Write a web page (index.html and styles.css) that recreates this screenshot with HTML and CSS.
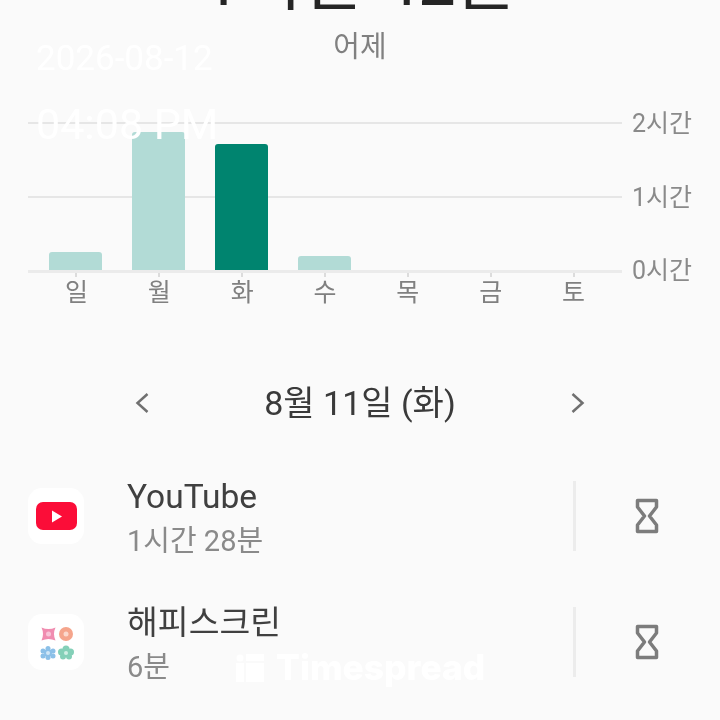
FILE: index.html
```html
<!DOCTYPE html>
<html>

<head>
    <title>Screen time</title>
    <link rel="stylesheet" href="styles.css">
</head>

<body>
    <div class="screen">
        <header class="summary">
            <h1 class="total">1시간 42분</h1>
            <p class="day-label">어제</p>
        </header>

        <section class="chart">
            <div class="plot">
                <div class="gridline gridline-top"><span class="axis-label">2시간</span></div>
                <div class="gridline gridline-mid"><span class="axis-label">1시간</span></div>
                <div class="bars">
                    <div class="bar-slot"><div class="bar" style="height: 18px"></div></div>
                    <div class="bar-slot"><div class="bar" style="height: 138px"></div></div>
                    <div class="bar-slot"><div class="bar bar-active" style="height: 126px"></div></div>
                    <div class="bar-slot"><div class="bar" style="height: 14px"></div></div>
                    <div class="bar-slot"></div>
                    <div class="bar-slot"></div>
                    <div class="bar-slot"></div>
                    <span class="axis-label axis-zero">0시간</span>
                </div>
            </div>
            <div class="days">
                <span class="day">일</span>
                <span class="day">월</span>
                <span class="day">화</span>
                <span class="day">수</span>
                <span class="day">목</span>
                <span class="day">금</span>
                <span class="day">토</span>
            </div>
        </section>

        <nav class="date-nav">
            <svg class="chevron" width="14" height="24" viewBox="0 0 14 24">
                <path d="M12.500 3 L2.500 12 L12.500 21" />
            </svg>
            <span class="date-title">8월 11일 (화)</span>
            <svg class="chevron" width="14" height="24" viewBox="0 0 14 24">
                <path d="M1.500 3 L11.500 12 L1.500 21" />
            </svg>
        </nav>

        <ul class="apps">
            <li class="app">
                <div class="app-icon">
                    <svg width="42" height="30" viewBox="0 0 42 30">
                        <rect x="1" y="1" width="41" height="28" rx="7" fill="#fb0d38" />
                        <path d="M17 9.500 L27 15.500 L17 21.500 Z" fill="#fff" />
                    </svg>
                </div>
                <div class="app-text">
                    <span class="app-name">YouTube</span>
                    <span class="app-time">1시간 28분</span>
                </div>
                <div class="timer">
                    <svg width="24" height="36" viewBox="0 0 24 36">
                        <path d="M2.500 2.500 H21.500 V9 L14.500 18 L21.500 27 V33.500 H2.500 V27 L9.500 18 L2.500 9 Z" />
                    </svg>
                </div>
            </li>
            <li class="app">
                <div class="app-icon">
                    <svg width="44" height="44" viewBox="0 0 44 44">
                        <path d="M7.500 7.500 Q14.500 10.500 21.500 7.500 Q18.500 14 21.500 20.500 Q14.500 17.500 7.500 20.500 Q10.500 14 7.500 7.500 Z" fill="#f08cb0" />
                        <circle cx="14.500" cy="14" r="2.500" fill="#f8c4d8" />
                        <circle cx="32" cy="14" r="7" fill="#f5a58c" />
                        <circle cx="32" cy="14" r="2.500" fill="#fbd8cc" />
                        <g fill="#8cc0e8">
                            <circle cx="14" cy="28.500" r="2.500" />
                            <circle cx="14" cy="37.500" r="2.500" />
                            <circle cx="9" cy="31" r="2.500" />
                            <circle cx="19" cy="31" r="2.500" />
                            <circle cx="9" cy="36" r="2.500" />
                            <circle cx="19" cy="36" r="2.500" />
                            <circle cx="14" cy="33" r="4" />
                        </g>
                        <circle cx="14" cy="33" r="2" fill="#d0e6f6" />
                        <g fill="#84d0b8">
                            <circle cx="32" cy="29" r="3.500" />
                            <circle cx="27.500" cy="32" r="3.500" />
                            <circle cx="36.500" cy="32" r="3.500" />
                            <circle cx="29" cy="36.500" r="3" />
                            <circle cx="35" cy="36.500" r="3" />
                            <circle cx="32" cy="33" r="4" />
                        </g>
                        <circle cx="32" cy="33" r="2" fill="#d0efe4" />
                    </svg>
                </div>
                <div class="app-text">
                    <span class="app-name">해피스크린</span>
                    <span class="app-time">6분</span>
                </div>
                <div class="timer">
                    <svg width="24" height="36" viewBox="0 0 24 36">
                        <path d="M2.500 2.500 H21.500 V9 L14.500 18 L21.500 27 V33.500 H2.500 V27 L9.500 18 L2.500 9 Z" />
                    </svg>
                </div>
            </li>
        </ul>

        <!-- watermark and timestamp sit on top of the screenshot -->
        <div class="stamp stamp-date">2026-08-12</div>
        <div class="stamp stamp-time">04:08 PM</div>
        <div class="watermark">
            <svg width="28" height="28" viewBox="0 0 28 28" fill="#fff">
                <circle cx="4" cy="4" r="3.500" />
                <rect x="0" y="9" width="8" height="19" />
                <rect x="10" y="0" width="18" height="7" />
                <rect x="10" y="9" width="18" height="19" />
            </svg>
            <span class="watermark-text">Timespread</span>
        </div>
    </div>
</body>

</html>
```
FILE: styles.css
```css
* {
    box-sizing: border-box;
}

body {
    margin: 0;
    padding: 0;
    background-color: #fafafa;
    font-family: Roboto, "Noto Sans CJK KR", sans-serif;
}

/* the reference is an upscaled phone capture, so everything is a bit soft */
.screen {
    position: relative;
    width: 720px;
    height: 720px;
    overflow: hidden;
    background-color: #fafafa;
    filter: blur(0.7px);
}

.summary {
    margin-top: -58px;
    display: flex;
    flex-direction: column;
    align-items: center;
}

.total {
    margin: 0;
    height: 85px;
    line-height: 80px;
    font-size: 67px;
    font-weight: 400;
    color: #252525;
    white-space: nowrap;
}

.day-label {
    margin: 0;
    font-size: 29px;
    line-height: 40px;
    color: #808080;
}

.chart {
    margin-top: 55px;
    padding-left: 28px;
}

.plot {
    position: relative;
    width: 594px;
    height: 151px;
}

.gridline {
    position: absolute;
    left: 0;
    right: 0;
    height: 2px;
    background-color: #e6e6e6;
}

.gridline-top {
    top: 0;
}

.gridline-mid {
    top: 74px;
}

.axis-label {
    position: absolute;
    left: 604px;
    top: -14px;
    font-size: 25px;
    line-height: 32px;
    color: #8a8a8a;
    white-space: nowrap;
}

.bars {
    position: absolute;
    left: 0;
    right: 0;
    bottom: 0;
    height: 151px;
    padding: 0 8px 0 6px;
    display: flex;
    align-items: flex-end;
    border-bottom: 3px solid #ebebeb;
}

.bar-slot {
    flex: 1;
    display: flex;
    justify-content: center;
    align-items: flex-end;
}

.bar {
    width: 53px;
    background-color: #b2dbd6;
    border-radius: 3px 3px 0 0;
}

.bar-active {
    background-color: #00846f;
}

.axis-zero {
    top: auto;
    bottom: -17px;
}

.days {
    width: 594px;
    padding: 0 7px;
    display: flex;
}

.day {
    position: relative;
    flex: 1;
    text-align: center;
    font-size: 25px;
    line-height: 40px;
    color: #808080;
}

/* small tick under the baseline */
.day::before {
    content: "";
    position: absolute;
    left: 50%;
    top: 0;
    width: 2px;
    height: 4px;
    margin-left: -1px;
    background-color: #dcdcdc;
}

.date-nav {
    margin-top: 68px;
    padding-left: 135px;
    width: 585px;
    display: flex;
    align-items: center;
    justify-content: space-between;
}

.date-title {
    font-size: 34px;
    line-height: 44px;
    color: #3a3a3a;
}

.chevron path {
    fill: none;
    stroke: #707070;
    stroke-width: 2.500;
}

.apps {
    list-style: none;
    margin: 50px 0 0;
    padding: 0;
}

.app {
    height: 126px;
    padding-left: 28px;
    display: flex;
    align-items: flex-start;
}

.app-icon {
    width: 56px;
    height: 56px;
    margin-top: 13px;
    border-radius: 14px;
    background-color: #fff;
    display: flex;
    align-items: center;
    justify-content: center;
}

.app-text {
    width: 446px;
    margin-left: 43px;
    display: flex;
    flex-direction: column;
}

.app-name {
    font-size: 33.500px;
    line-height: 44px;
    color: #404040;
}

.app-time {
    font-size: 29px;
    line-height: 44px;
    color: #8a8a8a;
}

.timer {
    width: 145px;
    height: 70px;
    margin-top: 6px;
    border-left: 3px solid #ececec;
    display: flex;
    align-items: center;
    justify-content: center;
}

.timer svg path {
    fill: none;
    stroke: #7c7c7c;
    stroke-width: 3.500;
    stroke-linejoin: round;
}

.stamp {
    position: absolute;
    left: 36px;
    color: #fff;
    white-space: nowrap;
}

.stamp-date {
    top: 39px;
    font-size: 35px;
    line-height: 40px;
}

.stamp-time {
    top: 101px;
    font-size: 43px;
    line-height: 46px;
}

.watermark {
    position: absolute;
    left: 236px;
    top: 652px;
    display: flex;
    align-items: center;
    gap: 12px;
}

.watermark-text {
    font-family: Inter, sans-serif;
    font-size: 35.300px;
    line-height: 32px;
    font-weight: 800;
    color: #fff;
}
```
